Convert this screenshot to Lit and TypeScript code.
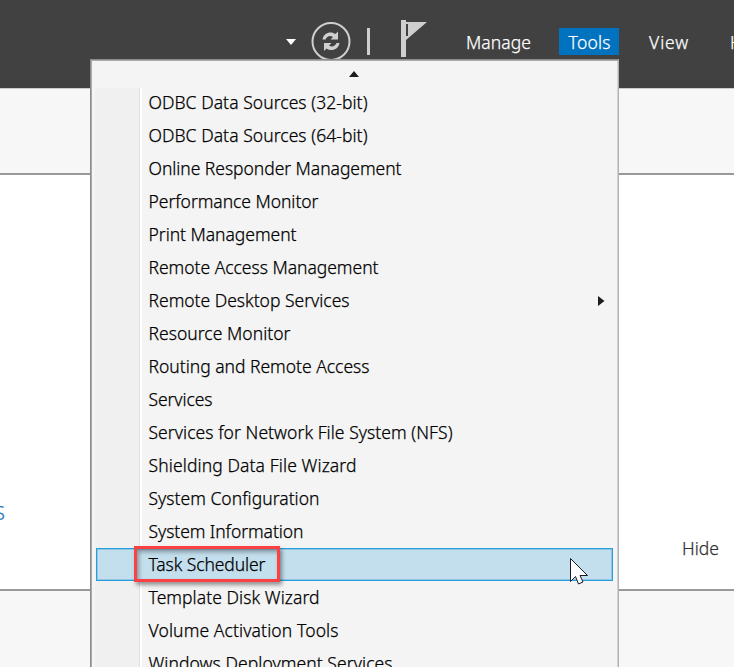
import { LitElement, html, css, svg } from "lit";
import { customElement } from "lit/decorators.js";

interface Item { label: string; width: number; sub?: boolean; active?: boolean }

const items: Item[] = [
  { label: "ODBC Data Sources (32-bit)", width: 219 },
  { label: "ODBC Data Sources (64-bit)", width: 219 },
  { label: "Online Responder Management", width: 253 },
  { label: "Performance Monitor", width: 170 },
  { label: "Print Management", width: 148 },
  { label: "Remote Access Management", width: 230 },
  { label: "Remote Desktop Services", width: 201, sub: true },
  { label: "Resource Monitor", width: 142 },
  { label: "Routing and Remote Access", width: 221 },
  { label: "Services", width: 64 },
  { label: "Services for Network File System (NFS)", width: 304 },
  { label: "Shielding Data File Wizard", width: 208 },
  { label: "System Configuration", width: 171 },
  { label: "System Information", width: 155 },
  { label: "Task Scheduler", width: 117, active: true },
  { label: "Template Disk Wizard", width: 171 },
  { label: "Volume Activation Tools", width: 190 },
  { label: "Windows Deployment Services", width: 244 },
];

@customElement("app-root")
export class AppRoot extends LitElement {
  static styles = css`
    :host { display: block; position: relative; width: 734px; height: 667px; overflow: hidden;
      font: 300 17.5px/33px "Noto Sans", "Open Sans", sans-serif; color: #000; background: #fff;
      -webkit-text-stroke: .25px currentColor; }
    * { box-sizing: border-box; }
    .page { display: grid; grid-template-rows: 88px 87px 414px 78px; grid-template-columns: 734px; height: 667px; }
    .bar { background: #414141; color: #fff; display: flex; padding-left: 286px; overflow: hidden; }
    .bar svg { display: block; flex: none; width: 150px; height: 88px; }
    nav { display: flex; padding: 28px 0 0 20px; height: 55px; line-height: 29px; flex: none; }
    nav a { padding: 0 10px; margin-right: 18px; height: 27px; flex: none; white-space: nowrap; }
    nav a.open { background: #0072be; width: 60px; padding: 0 9px 0 9.500px; margin-right: 20px; }
    nav a.view { margin-right: 21px; }
    .strip { background: #f7f7f7; border-bottom: 2px solid #999; border-top: 1px solid #ccc; }
    .content { display: flex; justify-content: space-between; align-items: flex-start; }
    .link { color: #2277bb; font-size: 20px; margin: 321px 0 0 -6px; }
    .hide { color: #333; margin: 357px 15px 0 0; }
    .foot { background: #f7f7f7; border-top: 2px solid #999; }
    .menu { position: absolute; left: 90px; top: 59px; width: 529px; height: 620px; background: #f4f4f4;
      border: 1px solid #8c8c8c; border-right-color: #b2b2b2; box-shadow: inset 1px 1px #aaa, inset -1px 0 #d2d2d2; padding: 1px 5px; }
    .menu::before { content: ""; position: absolute; left: 4px; top: 28px; width: 45px; bottom: 0;
      background: #f0f0f0; border-right: 2px solid #fff; box-shadow: inset -1px 0 #e1e1e1; }
    .up { display: block; width: 10px; height: 6px; margin: 10px 0 9px 253px; }
    .row { position: relative; height: 33px; padding: 0 8.500px 0 52.500px; display: flex; justify-content: space-between; align-items: center; }
    .row.active { background: #c3deed; border: 1px solid #26a0da; box-shadow: inset 0 0 0 1px #91c5e3; padding-left: 51.500px; }
    .fit { white-space: pre; display: inline-block; }
    .mark { position: absolute; left: 134px; top: 546px; width: 146px; height: 36px; border: 3px solid #fb4143;
      box-shadow: 2px 3px 4px #0006, inset 2px 3px 4px #0005; }
    .cursor { position: absolute; left: 569px; top: 557px; }
  `;

  firstUpdated() {
    this.renderRoot.querySelectorAll<HTMLElement>(".fit").forEach((el) => {
      const w = Number(el.dataset.w);
      const gap = (w - el.getBoundingClientRect().width) / (el.textContent!.length - 1);
      el.style.letterSpacing = gap + "px";
    });
  }

  private fit(label: string, width: number) {
    return html`<span class="fit" data-w=${width}>${label}</span>`;
  }

  render() {
    const arrow = svg`<path d="M-8.500-1.500C-7.500-8-.5-10.500 4.500-7L7-9.500V-1.500H-.5L2-4C-1-6-4-5-5.500-1.500Z"/>`;
    return html`
      <div class="page">
        <header class="bar">
          <svg viewBox="286 0 150 88">
            <path d="M286 39h10l-5 6z" fill="#fff"/>
            <circle cx="331" cy="41.500" r="18.500" fill="none" stroke="#cfcfcf" stroke-width="2"/>
            <g fill="#cfcfcf"><g transform="translate(331 41)">${arrow}</g><g transform="translate(331 41.500) rotate(180)">${arrow}</g></g>
            <path d="M367 28h3v27h-3z" fill="#cfcfcf"/>
            <path d="M401 20h5v2h21l-21 18v17h-5z" fill="#cfcfcf"/>
            <path d="M407 24v12" stroke="#414141" stroke-width="2"/>
          </svg>
          <nav>
            <a>${this.fit("Manage", 65)}</a><a class="open">${this.fit("Tools", 42)}</a><a class="view">${this.fit("View", 39)}</a><a>Help</a>
          </nav>
        </header>
        <div class="strip"></div>
        <main class="content"><span class="link">S</span><span class="hide">${this.fit("Hide", 37)}</span></main>
        <div class="foot"></div>
      </div>
      <div class="menu">
        <svg class="up" viewBox="0 0 10 6"><path d="M5 0l5 6H0z" fill="#1c1c1c"/></svg>
        ${items.map((i) => html`<div class="row ${i.active ? "active" : ""}">${this.fit(i.label, i.width)}
          ${i.sub ? html`<svg width="7" height="10"><path d="M0 0l6.500 5L0 10z" fill="#1c1c1c"/></svg>` : ""}</div>`)}
      </div>
      <div class="mark"></div>
      <svg class="cursor" width="22" height="30"><path d="M1.500 1.500V24.500L6.500 19.500L9.500 27L14 25L11 18.500H18.500Z" fill="#fff" stroke="#1a1a2a"/></svg>
    `;
  }
}
